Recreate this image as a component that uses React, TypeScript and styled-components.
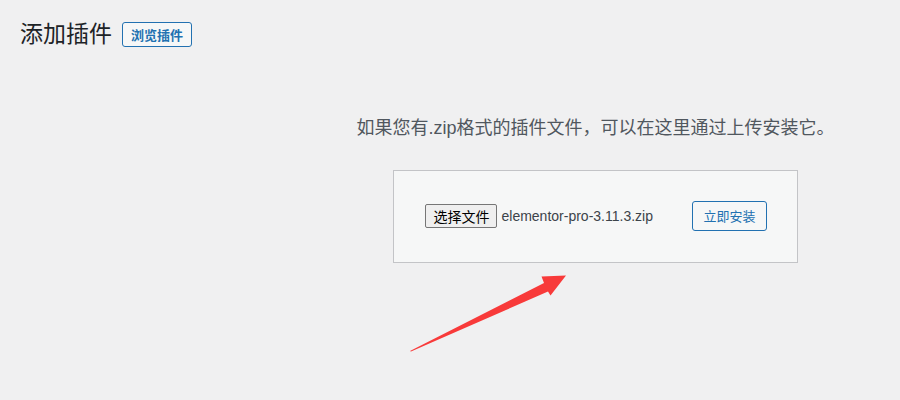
import React from "react";
import styled, { createGlobalStyle } from "styled-components";

const Global = createGlobalStyle`
  html, body {
    margin: 0;
    padding: 0;
    background: #f0f0f1;
  }
  body {
    width: 900px;
    height: 400px;
    overflow: hidden;
    font-family: "Liberation Sans", "Noto Sans CJK SC", sans-serif;
    color: #3c434a;
  }
`;

const Page = styled.div`
  position: relative;
  width: 900px;
  height: 400px;
  box-sizing: border-box;
`;

const Header = styled.div`
  display: flex;
  align-items: center;
  gap: 10px;
  padding: 22px 0 0 20px;
  height: 25px;
`;

const Title = styled.h1`
  margin: 0;
  font-family: "Liberation Sans", "Noto Sans CJK SC", sans-serif;
  font-size: 23px;
  font-weight: 400;
  line-height: 25px;
  color: #1d2327;
`;

const TitleAction = styled.a`
  display: inline-flex;
  align-items: center;
  box-sizing: border-box;
  height: 25px;
  padding: 0 8px;
  border: 1px solid #2271b1;
  border-radius: 3px;
  background: #f6f7f7;
  color: #2271b1;
  font-family: "Noto Sans CJK SC", sans-serif;
  font-size: 13px;
  font-weight: 700;
  text-decoration: none;
`;

const Main = styled.div`
  padding-left: 291px;
  text-align: center;
`;

const Help = styled.p`
  margin: 68px 0 0;
  font-family: "Liberation Sans", "Noto Sans CJK SC", sans-serif;
  font-size: 18px;
  line-height: 27px;
  color: #50575e;
`;

const UploadForm = styled.form`
  display: inline-block;
  margin-top: 28px;
  padding: 30px 30px 31px 31px;
  background: #f6f7f7;
  border: 1px solid #c3c4c7;
  text-align: left;
`;

const Row = styled.div`
  display: flex;
  align-items: center;
  gap: 3px;
`;

const FileField = styled.div`
  display: flex;
  align-items: center;
  width: 264px;
`;

const FileButton = styled.span`
  display: inline-flex;
  align-items: center;
  justify-content: center;
  box-sizing: border-box;
  width: 72px;
  height: 24px;
  border: 1px solid #767676;
  border-radius: 2px;
  background: #efefef;
  color: #000;
  font-family: "Noto Sans CJK SC", sans-serif;
  font-size: 14px;
`;

const FileName = styled.span`
  margin-left: 4px;
  font-family: "Liberation Sans", sans-serif;
  font-size: 14px;
  color: #3c434a;
`;

const InstallButton = styled.button`
  box-sizing: border-box;
  height: 30px;
  padding: 0 10px;
  border: 1px solid #2271b1;
  border-radius: 3px;
  background: #f6f7f7;
  color: #2271b1;
  font-family: "Noto Sans CJK SC", sans-serif;
  font-size: 13px;
  line-height: 28px;
  cursor: pointer;
`;

const ArrowLayer = styled.svg`
  position: absolute;
  left: 0;
  top: 0;
  pointer-events: none;
`;

export default function App() {
  return (
    <Page>
      <Global />
      <Header>
        <Title>添加插件</Title>
        <TitleAction href="#">浏览插件</TitleAction>
      </Header>
      <Main>
        <Help>如果您有.zip格式的插件文件，可以在这里通过上传安装它。</Help>
        <UploadForm onSubmit={(e) => e.preventDefault()}>
          <Row>
            <FileField>
              <FileButton>选择文件</FileButton>
              <FileName>elementor-pro-3.11.3.zip</FileName>
            </FileField>
            <InstallButton type="submit">立即安装</InstallButton>
          </Row>
        </UploadForm>
      </Main>
      <ArrowLayer width="900" height="400" viewBox="0 0 900 400">
        <polygon
          points="410,351 544,283 541.5,276.5 566,275.5 550.5,295.5 548,291.5 411,351.5"
          fill="#f83a3a"
        />
      </ArrowLayer>
    </Page>
  );
}
